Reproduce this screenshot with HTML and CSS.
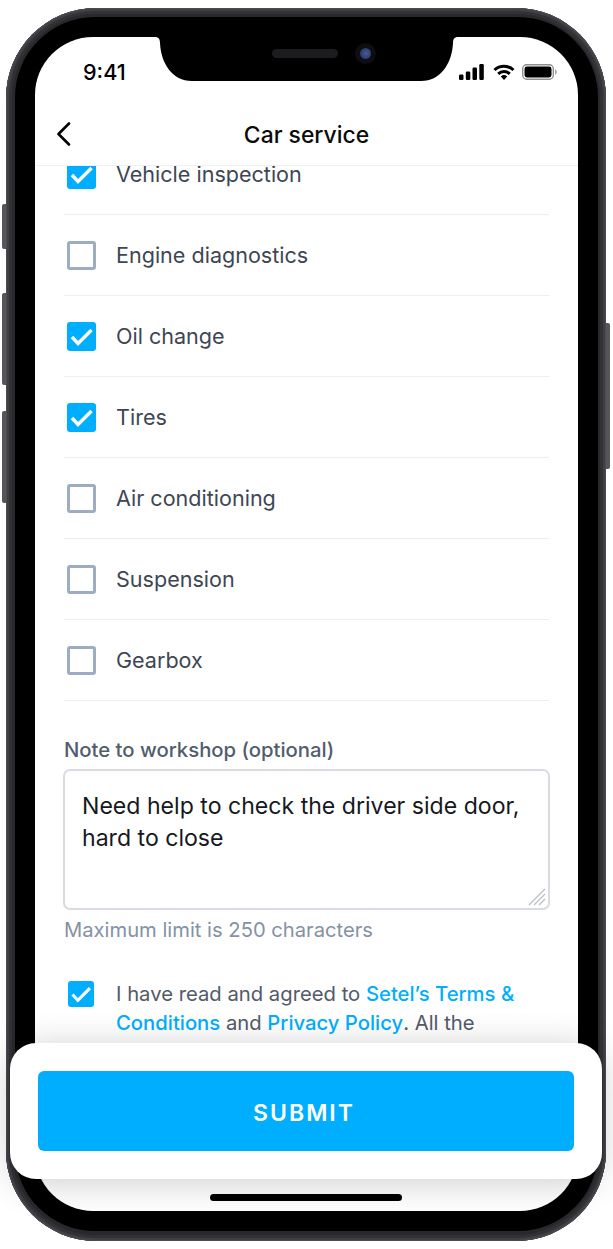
FILE: index.html
```html
<!DOCTYPE html>
<html lang="en">
<head>
<meta charset="utf-8">
<title>Car service</title>
<link rel="stylesheet" href="styles.css">
</head>
<body>
<div class="phone">
  <span class="side side-a"></span>
  <span class="side side-b"></span>
  <span class="side side-c"></span>
  <span class="side side-d"></span>
  <div class="bezel">
    <div class="screen">
      <div class="status">
        <span class="time">9:41</span>
        <div class="status-icons">
          <svg class="signal" width="25" height="16" viewBox="0 0 25 16"><rect x="0" y="10.500" width="4.500" height="5.500" rx="1.200"/><rect x="6.800" y="7.500" width="4.500" height="8.500" rx="1.200"/><rect x="13.500" y="3.500" width="4.500" height="12.500" rx="1.200"/><rect x="20.300" y="0" width="4.500" height="16" rx="1.200"/></svg>
          <svg width="22" height="16" viewBox="0 0 22 16"><path d="M1.500 6a14 14 0 0 1 19 0" fill="none" stroke="#000" stroke-width="3"/><path d="M5.200 9.800a8.800 8.800 0 0 1 11.600 0" fill="none" stroke="#000" stroke-width="3"/><path d="M7.800 12.400a4.800 4.800 0 0 1 6.400 0L11 16z"/></svg>
          <svg width="35" height="16" viewBox="0 0 35 16"><rect x="0.700" y="0.700" width="30.600" height="14.600" rx="4" fill="none" stroke="#8f8f8f" stroke-width="1.400"/><rect x="2.500" y="2.500" width="27" height="11" rx="2.400"/><path d="M33 5.300c1.200.4 1.800 1.400 1.800 2.700s-.6 2.300-1.800 2.700z" fill="#a5a5a5"/></svg>
        </div>
      </div>
      <header class="nav">
        <svg class="back" width="15" height="24" viewBox="0 0 15 24"><path d="M13 1.500 2.500 12 13 22.500" fill="none" stroke="#000" stroke-width="2.600" stroke-linecap="round" stroke-linejoin="round"/></svg>
        <h1 class="title">Car service</h1>
      </header>
      <main class="content">
        <ul class="list">
          <li class="row"><span class="box on"><svg class="tick" viewBox="0 0 29 29"><path d="M5 15l6 6.500L24.500 8"/></svg></span>Vehicle inspection</li>
          <li class="row"><span class="box"></span>Engine diagnostics</li>
          <li class="row"><span class="box on"><svg class="tick" viewBox="0 0 29 29"><path d="M5 15l6 6.500L24.500 8"/></svg></span>Oil change</li>
          <li class="row"><span class="box on"><svg class="tick" viewBox="0 0 29 29"><path d="M5 15l6 6.500L24.500 8"/></svg></span>Tires</li>
          <li class="row"><span class="box"></span>Air conditioning</li>
          <li class="row"><span class="box"></span>Suspension</li>
          <li class="row"><span class="box"></span>Gearbox</li>
        </ul>
        <div class="field-label">Note to workshop (optional)</div>
        <div class="note">Need help to check the driver side door, hard to close
          <svg class="grip" width="18" height="18" viewBox="0 0 18 18"><path d="M1 17 17 1M6 17 17 6M11 17l6-6" fill="none" stroke="#b9bdc6" stroke-width="1.200"/></svg>
        </div>
        <div class="hint">Maximum limit is 250 characters</div>
        <div class="agree">
          <span class="box small on"><svg class="tick" viewBox="0 0 29 29"><path d="M5 15l6 6.500L24.500 8"/></svg></span>
          <p class="agree-text">I have read and agreed to <a class="link">Setel’s Terms &amp; Conditions</a> and <a class="link">Privacy Policy</a>. All the information provided is accurate.</p>
        </div>
      </main>
      <div class="home"></div>
    </div>
    <svg class="notch" width="303" height="44" viewBox="0 0 303 44"><path d="M0 0H303C299.500 0 298 2 298 6C297 26 286 44 266 44H37C17 44 6 26 5 6C5 2 3.500 0 0 0Z" fill="#000"/></svg>
    <span class="speaker"></span>
    <span class="camera"><span class="lens"></span></span>
  </div>
  <div class="action-card">
    <button class="submit">SUBMIT</button>
  </div>
</div>
</body>
</html>
```
FILE: styles.css
```css
* { box-sizing: border-box; }
html, body { margin: 0; padding: 0; background: #fff; }
body { width: 613px; height: 1249px; overflow: hidden; font-family: Inter, "Liberation Sans", sans-serif; }

.phone {
  position: relative;
  width: 600px;
  height: 1233px;
  margin: 8px 0 0 6px;
  padding: 9px 8px 10px 9px;
  border-radius: 90px;
  background: #29292c;
  box-shadow: inset 0 0 0 1px #4c4c51, inset 0 0 0 3px #3f3f44, inset 0 0 0 6px #323236;
}
.side { position: absolute; width: 4px; background: #55555b; }
.side-a { left: -4px; top: 196px; height: 45px; border-radius: 2px 0 0 2px; }
.side-b { left: -4px; top: 285px; height: 92px; border-radius: 2px 0 0 2px; }
.side-c { left: -4px; top: 403px; height: 92px; border-radius: 2px 0 0 2px; }
.side-d { right: -4px; top: 315px; height: 146px; border-radius: 0 2px 2px 0; }

.bezel {
  position: relative;
  height: 100%;
  padding: 20px;
  border-radius: 80px;
  background: #000;
}
.screen {
  display: flex;
  flex-direction: column;
  position: relative;
  height: 1174px;
  border-radius: 58px;
  overflow: hidden;
  background: #fff;
}
.status {
  display: flex;
  justify-content: space-between;
  align-items: center;
  height: 63px;
  padding: 6px 21px 0 48px;
  flex: none;
}
.time { font-size: 21.600px; font-weight: 500; color: #000; line-height: 56px; }
.status-icons { display: flex; align-items: center; gap: 7px; }
.signal { margin-right: 2px; }
.nav {
  position: relative;
  z-index: 1;
  display: flex;
  align-items: center;
  justify-content: center;
  height: 66px;
  flex: none;
  background: #fff;
  border-bottom: 1px solid #eef0f5;
}
.back { position: absolute; left: 21px; top: 22px; }
.title { margin: 4px 0 0; font-size: 22.900px; font-weight: 500; color: #0b0b0b; line-height: 30px; }

.content { flex: 1; min-height: 0; padding: 0 29px; overflow: hidden; }
.list { list-style: none; margin: -32px 0 0; padding: 0; }
.row {
  display: flex;
  align-items: center;
  gap: 20px;
  height: 81px;
  padding-left: 3px;
  border-bottom: 1px solid #eceef2;
  font-size: 21.550px;
  color: #3e4654;
}
.box {
  display: flex;
  align-items: center;
  justify-content: center;
  flex: none;
  width: 29px;
  height: 29px;
  border: 3px solid #9dacc0;
  border-radius: 3px;
  background: #fff;
}
.box.on { border: 0; background: #00aeff; }
.box.small { width: 26px; height: 26px; }
.tick { display: block; width: 100%; height: 100%; }
.tick path { fill: none; stroke: #fff; stroke-width: 3.400; }

.field-label { margin-top: 37px; font-size: 20.300px; font-weight: 500; line-height: 24px; color: #525d6c; }
.note {
  position: relative;
  height: 141px;
  margin: 7px -1px 0;
  padding: 18.500px 17px;
  border: 2px solid #d9dbe2;
  border-radius: 7px;
  font-size: 23.100px;
  line-height: 32px;
  color: #16181d;
}
.grip { position: absolute; right: 2px; bottom: 2px; }
.hint { margin-top: 8px; font-size: 20.200px; line-height: 24px; color: #8592a3; }
.agree { display: flex; gap: 22px; margin-top: 37px; padding-left: 4px; }
.agree-text { margin: 0; font-size: 20.250px; line-height: 29px; color: #525a68; width: 415px; }
.agree .box { margin-top: 2px; }
.link { color: #00aeff; font-weight: 500; }

.home {
  position: absolute;
  left: 175px;
  bottom: 10px;
  width: 192px;
  height: 7px;
  border-radius: 4px;
  background: #000;
}
.notch { position: absolute; left: 140px; top: 20px; }
.speaker { position: absolute; left: 257px; top: 32px; width: 66px; height: 9px; border-radius: 5px; background: #1c1c1e; }
.camera { display: flex; align-items: center; justify-content: center; position: absolute; left: 340px; top: 26px; width: 21px; height: 21px; border-radius: 50%; background: #0d0d12; }
.lens { width: 11px; height: 11px; border-radius: 50%; background: radial-gradient(circle at 55% 50%, #5a4fa0, #27456f 60%, #182338); }

.action-card {
  position: absolute;
  left: 4px;
  top: 1035px;
  width: 592px;
  height: 136px;
  padding: 28px;
  border-radius: 26px;
  background: #fff;
  box-shadow: 0 4px 36px rgba(0, 0, 0, .2);
}
.submit {
  display: block;
  width: 536px;
  height: 80px;
  padding: 4px 4px 0 0;
  border: 0;
  border-radius: 6px;
  background: #00aeff;
  color: #fff;
  font-family: inherit;
  font-size: 23px;
  font-weight: 600;
  letter-spacing: 2px;
}
```
